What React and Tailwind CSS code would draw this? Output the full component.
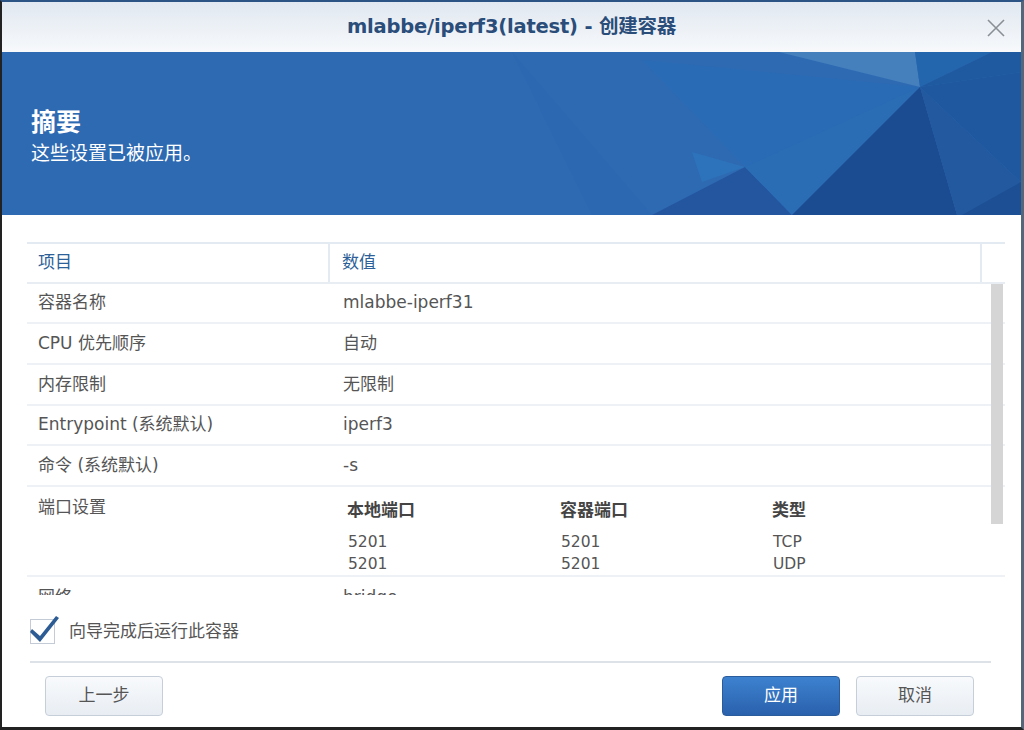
import React from 'react';

const font = { fontFamily: '"DejaVu Sans", "Noto Sans CJK SC", sans-serif' };

const rows = [
    { k: '容器名称', v: 'mlabbe-iperf31', h: 'h-[40px]' },
    { k: 'CPU 优先顺序', v: '自动', h: 'h-[41px]' },
    { k: '内存限制', v: '无限制', h: 'h-[41px]' },
    { k: 'Entrypoint (系统默认)', v: 'iperf3', h: 'h-[40px]' },
    { k: '命令 (系统默认)', v: '-s', h: 'h-[41px]' },
];

const ports = [
    { local: '5201', container: '5201', type: 'TCP' },
    { local: '5201', container: '5201', type: 'UDP' },
];

const Banner = () => (
    <div className="relative h-[163px] bg-[#2e6ab2] overflow-hidden">
        <svg className="absolute inset-0" width="1019" height="163" viewBox="0 0 1019 163" preserveAspectRatio="none">
            <polygon points="0,0 1019,0 1019,163 0,163" fill="#2e6ab2" />
            <polygon points="510,0 590,163 650,163" fill="#2c68b1" />
            <polygon points="640,8 918,35 743,115" fill="#2a6bb6" />
            <polygon points="650,163 743,115 790,163" fill="#24569f" />
            <polygon points="743,115 918,35 790,163" fill="#2a6db5" />
            <polygon points="777,0 913,0 918,35" fill="#4580bd" />
            <polygon points="913,0 990,0 918,35" fill="#2466ae" />
            <polygon points="990,0 1019,0 1019,20 918,35" fill="#1f5aa0" />
            <polygon points="918,35 790,163 955,163" fill="#1b4b90" />
            <polygon points="918,35 1019,20 1019,130" fill="#1f589e" />
            <polygon points="918,35 1019,130 1019,163 955,163" fill="#22599f" />
            <polygon points="1019,130 1019,163 960,163" fill="#1d4f94" />
            <polygon points="690,100 743,115 700,130" fill="#2b7cc4" opacity="0.5" />
        </svg>
        <div className="relative pl-[29px] pt-[56px] text-white">
            <div className="text-[25px] font-bold leading-[30px]">摘要</div>
            <div className="text-[19px] leading-[31px]">这些设置已被应用。</div>
        </div>
    </div>
);

const Check = () => (
    <div className="relative w-[25px] h-[25px] border border-[#c3ccd6] bg-white">
        <svg className="absolute -left-[1px] -top-[8px]" width="32" height="32" viewBox="0 0 32 32">
            <path d="M2 17 L10 24 L26 4 L29 6 L10 30 L0 20 Z" fill="#2d5c94" />
        </svg>
    </div>
);

const App = () => {
    return (
        <div className="w-[1024px] h-[730px] flex flex-col bg-white border-t-2 border-t-[#2c5586] border-l-2 border-l-[#222] border-r-[3px] border-r-[#55657a] border-b-[3px] border-b-[#222] overflow-hidden" style={font}>
            <div className="relative h-[50px] shrink-0 flex items-center justify-center bg-gradient-to-b from-[#e1e8f1] to-[#f7f9fb]">
                <span className="text-[19.5px] font-bold text-[#2a4d7a] tracking-[-0.2px]">mlabbe/iperf3(latest) - 创建容器</span>
                <svg className="absolute right-[16px] top-[17px]" width="18" height="18" viewBox="0 0 18 18">
                    <path d="M1 1 L17 17 M17 1 L1 17" stroke="#8a8f96" strokeWidth="1.6" />
                </svg>
            </div>

            <Banner />

            <div className="flex-1 flex flex-col pl-[25px] pr-[16px] pt-[27px]">
                <div className="border-t-2 border-[#e4eaf2]">
                    <div className="flex h-[40px] border-b-2 border-[#e8edf3] text-[17px] text-[#2d5f98]">
                        <div className="w-[303px] pl-[11px] flex items-center border-r-2 border-[#e4eaf2]">项目</div>
                        <div className="flex-1 pl-[12px] flex items-center border-r-2 border-[#e4eaf2]">数值</div>
                        <div className="w-[23px]" />
                    </div>
                    <div className="relative h-[311px] overflow-hidden text-[17px] text-[#555]">
                        <div className="absolute right-[2px] top-0 w-[12px] h-[240px] bg-[#d5d5d5]" />
                        {rows.map((r) => (
                            <div key={r.k} className={`flex ${r.h} items-center border-b-2 border-[#eef1f5]`}>
                                <div className="w-[303px] pl-[11px]">{r.k}</div>
                                <div className="flex-1 pl-[13px]">{r.v}</div>
                            </div>
                        ))}
                        <div className="flex h-[90px] border-b-2 border-[#eef1f5] pt-[7px]">
                            <div className="w-[303px] pl-[11px] leading-[26px]">端口设置</div>
                            <div className="flex-1 pl-[17px]">
                                <div className="grid grid-cols-[213px_212px_1fr] font-bold text-[#444] text-[17px] leading-[32px]">
                                    <div>本地端口</div>
                                    <div>容器端口</div>
                                    <div>类型</div>
                                </div>
                                <div className="pt-[5px] pl-[1px]">
                                    {ports.map((p) => (
                                        <div key={p.type} className="grid grid-cols-[213px_212px_1fr] leading-[22px] text-[15.5px]">
                                            <div>{p.local}</div>
                                            <div>{p.container}</div>
                                            <div>{p.type}</div>
                                        </div>
                                    ))}
                                </div>
                            </div>
                        </div>
                        <div className="flex h-[40px] pt-[8px]">
                            <div className="w-[303px] pl-[11px]">网络</div>
                            <div className="flex-1 pl-[13px]">bridge</div>
                        </div>
                    </div>
                </div>

                <div className="flex items-center gap-[14px] pl-[3px] pt-[24px] h-[49px]">
                    <Check />
                    <span className="text-[17px] text-[#555]">向导完成后运行此容器</span>
                </div>
                <div className="ml-[3px] mr-[14px] mt-[17px] border-t-2 border-[#dde2e8]" />

                <div className="flex items-center justify-between pl-[18px] pr-[31px] pt-[13px]">
                    <button className="w-[118px] h-[40px] rounded-[4px] border border-[#c6cfd9] bg-gradient-to-b from-[#f8fafc] to-[#e8edf3] text-[17px] text-[#555]">上一步</button>
                    <div className="flex gap-[16px]">
                        <button className="w-[118px] h-[40px] rounded-[4px] border border-[#2a5c9c] bg-gradient-to-b from-[#3d82cf] to-[#2a61ad] text-[17px] text-white">应用</button>
                        <button className="w-[118px] h-[40px] rounded-[4px] border border-[#c6cfd9] bg-gradient-to-b from-[#f8fafc] to-[#e8edf3] text-[17px] text-[#555]">取消</button>
                    </div>
                </div>
            </div>
        </div>
    );
};

export default App;
